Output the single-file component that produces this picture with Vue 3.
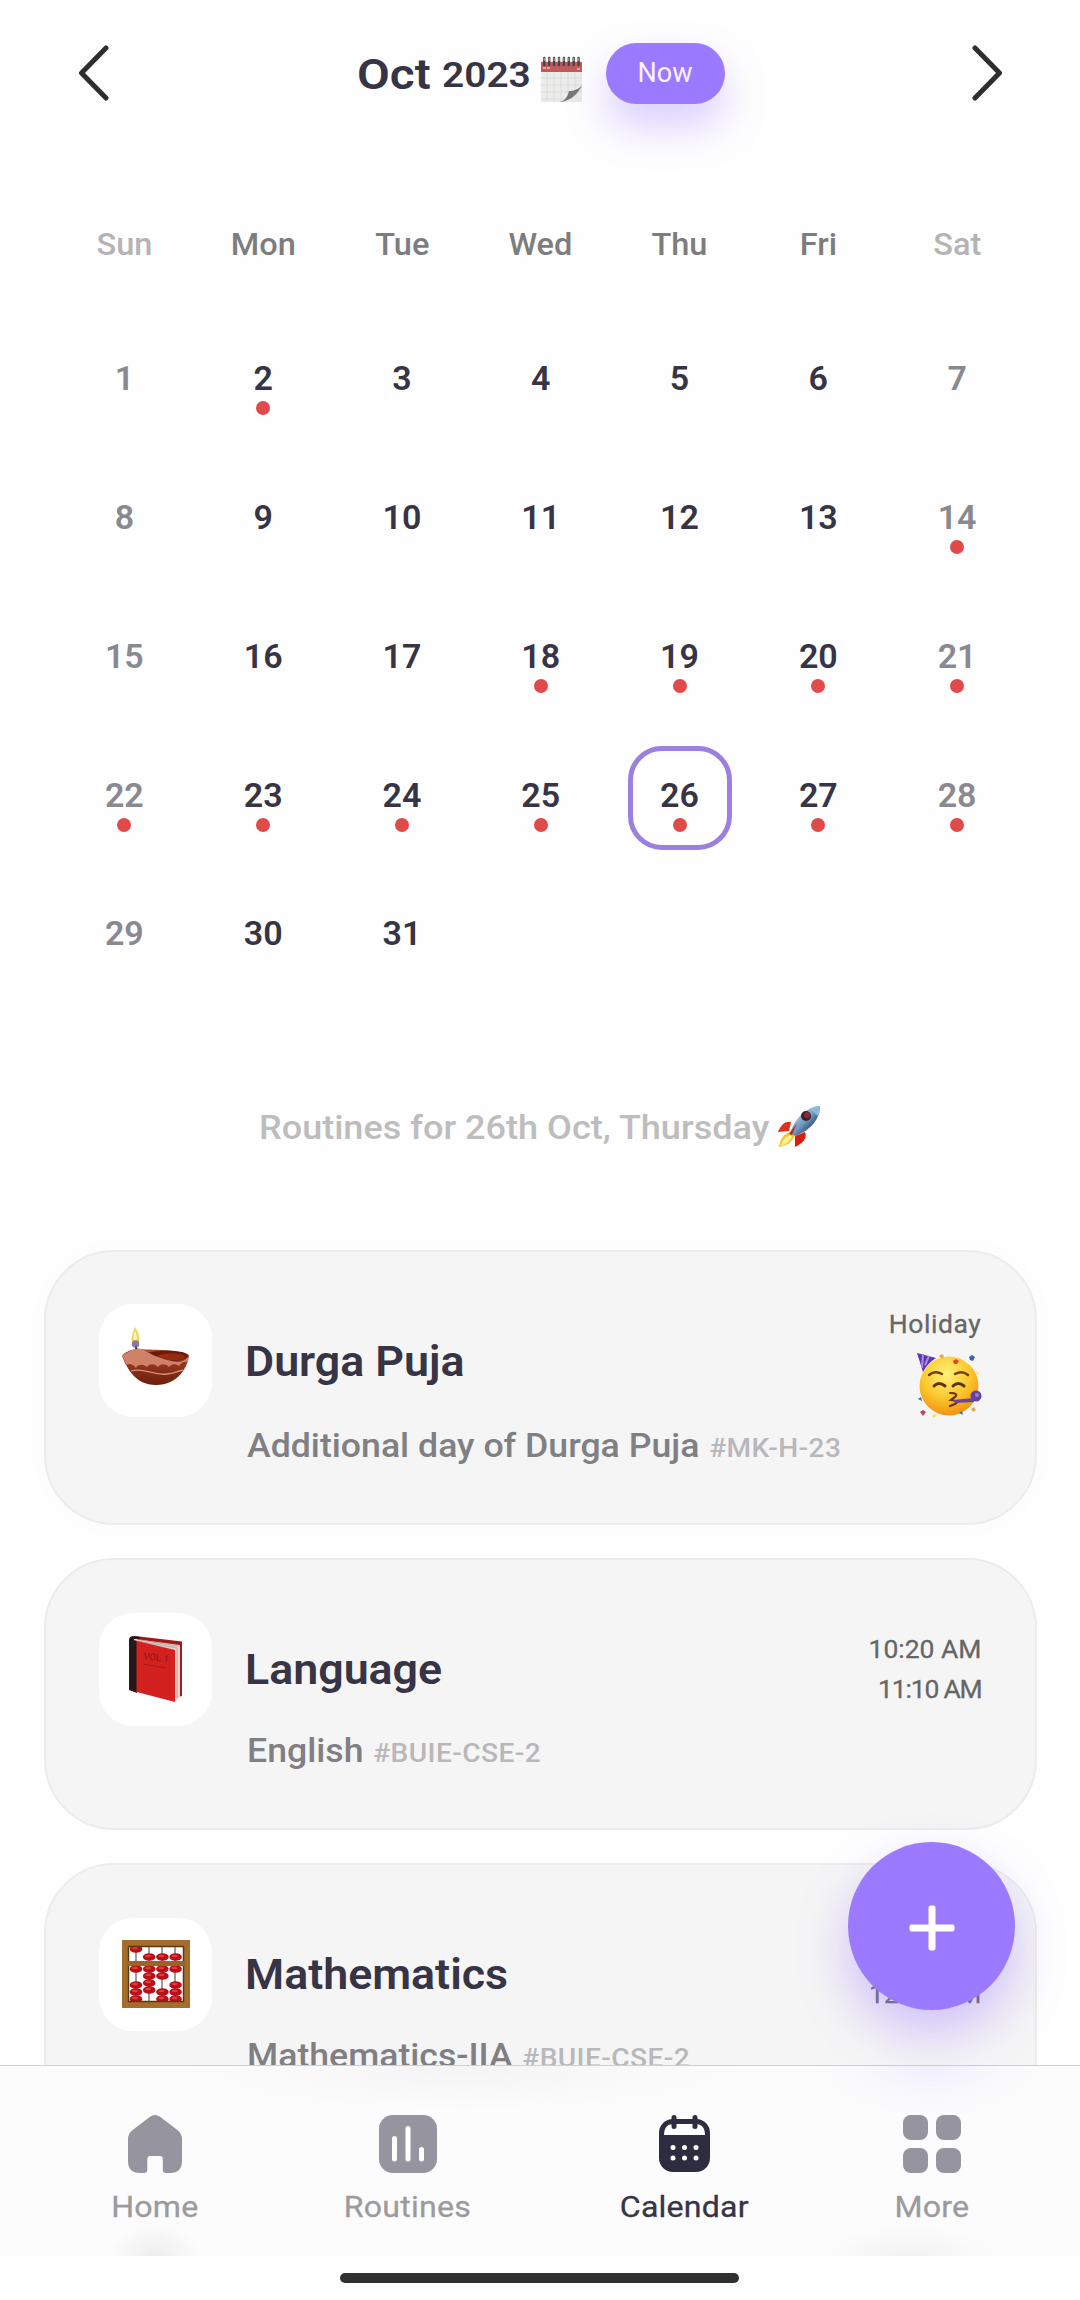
<script setup>
const weekdays = ['Sun', 'Mon', 'Tue', 'Wed', 'Thu', 'Fri', 'Sat']
const marked = [2, 14, 18, 19, 20, 21, 22, 23, 24, 25, 26, 27, 28]
const days = Array.from({ length: 31 }, (_, i) => ({
  n: i + 1,
  weekend: i % 7 === 0 || i % 7 === 6,
  event: marked.includes(i + 1),
  selected: i + 1 === 26,
}))
const beads = [
  [0, 7], [1, 15], [2, 15], [3, 15],
  [0, 27], [1, 27], [2, 27], [3, 27], [1, 34], [2, 34],
  [0, 43], [1, 41], [3, 43], [1, 48], [0, 50], [2, 50], [3, 50], [0, 57], [2, 57], [3, 57],
]
const routines = [
  { icon: 'diya', title: 'Durga Puja', sub: 'Additional day of Durga Puja', code: '#MK-H-23', holiday: true },
  { icon: 'book', title: 'Language', sub: 'English', code: '#BUIE-CSE-2', times: ['10:20 AM', '11:10 AM'] },
  { icon: 'abacus', title: 'Mathematics', sub: 'Mathematics-IIA', code: '#BUIE-CSE-2', times: ['11:10 AM', '12:00 PM'] },
]
</script>

<template>
  <div class="screen">
    <main class="content">
      <header class="top">
        <svg class="arrow" width="31" height="56" viewBox="0 0 31 56"><path d="M28 3 3.500 28 28 53" /></svg>
        <div class="heading">
          <span class="month">Oct</span>
          <span class="year">2023</span>
          <svg class="pad" width="41" height="46" viewBox="0 0 41 46">
            <rect y="5" width="41" height="41" fill="#ececeb" />
            <path d="M0 22H41M0 29H41M0 36H41M0 43H41M6 16V46M13 16V46M20 16V46M27 16V46M34 16V46" stroke="#d9d9d8" stroke-width=".8" />
            <rect y="6" width="41" height="10" fill="#c25a5c" />
            <path d="M2 12h3M6 12h3M36 13h3" stroke="#e3a3a3" stroke-width="2" />
            <path d="M18 46C25 45 27 39 28 35 33 35 38 33 41 29V46Z" fill="#d8d8d7" />
            <path d="M18 46C25 45 27 39 28 35 33 35 38 33 41 29 37 37 30 45 20 46Z" fill="#777" />
            <path d="M21 46C31 44 37 38 41 32V46Z" fill="#e9e9e8" />
            <g v-for="i in 8" :key="i">
              <path :d="`M${i * 4.9 - 1.6} 9V2`" stroke="#444" stroke-width="2.400" stroke-linecap="round" />
              <path :d="`M${i * 4.9 - 1.6} 5V2`" stroke="#bbb" stroke-width=".9" />
            </g>
          </svg>
          <button class="now">Now</button>
        </div>
        <svg class="arrow" width="31" height="56" viewBox="0 0 31 56"><path d="M3 3 27.500 28 3 53" /></svg>
      </header>

      <section class="calendar">
        <div v-for="(d, i) in weekdays" :key="d" class="weekday" :class="{ dim: i === 0 || i === 6 }">{{ d }}</div>
        <div v-for="d in days" :key="d.n" class="cell">
          <div class="day" :class="{ weekend: d.weekend, selected: d.selected }">
            <span>{{ d.n }}</span>
            <i v-if="d.event" class="dot"></i>
          </div>
        </div>
      </section>

      <h2 class="routines-title">
        <span>Routines for 26th Oct, Thursday</span>
        <svg width="43" height="42" viewBox="0 0 43 42">
          <defs>
            <linearGradient id="hull" x1="0" y1="0" x2="1" y2="1">
              <stop offset=".2" stop-color="#b9d6ea" /><stop offset=".5" stop-color="#6d9cc4" /><stop offset=".8" stop-color="#26374d" />
            </linearGradient>
          </defs>
          <path d="M13 16C8 15 3 18 0 26L11 25Z" fill="#e0301e" />
          <path d="M27 26C29 31 27 36 17 41L17 30Z" fill="#d3200f" />
          <path d="M13 26C6 27 2 33 1 41 8 40 14 37 17 29Z" fill="#f9c52a" />
          <path d="M12 29C7 31 4 35 3 40 8 38 11 36 14 31Z" fill="#fff19a" />
          <path d="M42 0C30 1 20 9 14 22L12 27 17 30C31 25 42 14 42 0Z" fill="url(#hull)" />
          <path d="M42 0C38 0 35 1 32 3L40 10C42 7 42 3 42 0Z" fill="#8fb9db" />
          <circle cx="28" cy="10" r="5" fill="#37222b" /><circle cx="29" cy="9" r="3" fill="#8a2a2a" />
          <path d="M19 17 11 28 14 29Z" fill="#be2718" />
        </svg>
      </h2>

      <section class="list">
        <article v-for="r in routines" :key="r.title" class="card" :class="{ holiday: r.holiday }">
          <div class="tile">
            <svg v-if="r.icon === 'diya'" class="diya" width="68" height="64" viewBox="0 0 68 64">
              <defs>
                <linearGradient id="bowl" x1="0" y1="0" x2="0" y2="1"><stop offset="0" stop-color="#b04a2c" /><stop offset="1" stop-color="#6d1d0c" /></linearGradient>
              </defs>
              <path d="M0 32C3 28 8 26 14 25 30 26 58 25 67 31 66 43 56 61 34 61 13 61 5 44 0 32Z" fill="url(#bowl)" />
              <ellipse cx="44" cy="32" rx="22" ry="5.500" fill="#6e1a08" />
              <ellipse cx="49" cy="33" rx="14" ry="3.500" fill="#932c10" />
              <path d="M0 32C4 29 9 26 15 24 25 26 33 35 55 38 61 38 66 35 67 31 67 34 66 36 65 38 62 37 59 39 57 42 53 39 49 40 47 43 43 39 38 40 36 43 32 39 27 40 25 43 21 40 16 40 14 44 11 40 7 39 5 41Z" fill="#cf8267" />
              <path d="M9 47C22 43 32 52 45 50 52 50 55 47 61 46" fill="none" stroke="#d78f72" stroke-width="1.300" />
              <path d="M14 25V18" stroke="#4c2b30" stroke-width="2" />
              <path d="M13 3C9 12 8 19 13 22 20 20 18 10 13 3Z" fill="#f2d35c" />
              <path d="M13 7C11 12 11 15 13 17 16 15 15 11 13 7Z" fill="#fff5b5" />
              <circle cx="13.500" cy="20" r="3.800" fill="#7967a3" opacity=".85" />
            </svg>
            <svg v-else-if="r.icon === 'book'" width="54" height="67" viewBox="0 0 54 67">
              <path d="M6 0 53 5.500V60L46 62Z" fill="#a01b17" />
              <path d="M5 3 51 9V61L45 66Z" fill="#e6cfcc" />
              <path d="M8 5 48 12M11 4 49 10M48 12V62" stroke="#b09d9b" stroke-width=".8" />
              <path d="M0 4Q0 0 5 0L11 1 11 3 5 3 8 57 0 54Z" fill="#26191b" />
              <path d="M4 4 46 14V66L4 55Z" fill="#d3211f" />
              <path d="M4 4 7.500 5V56L4 55Z" fill="#241719" />
              <text x="14" y="23" transform="rotate(8 14 23)" font-size="9.500" fill="#8e1414">VOL.1</text>
              <path d="M14 28 37 32" stroke="#a51a18" />
            </svg>
            <svg v-else width="68" height="68" viewBox="0 0 68 68">
              <path d="M14 6V62M27 6V62M40 6V62M53 6V62" stroke="#8b817e" stroke-width="1.600" />
              <g v-for="([c, y], i) in beads" :key="i">
                <ellipse :cx="14 + c * 13.2" :cy="y + 2" rx="6.300" ry="3.800" fill="#b90f18" />
                <ellipse :cx="13 + c * 13.2" :cy="y + 1" rx="3" ry="1.300" fill="#e33b3a" />
              </g>
              <rect x="3" y="3" width="62" height="62" fill="none" stroke="#a56d2c" stroke-width="6" />
              <rect x="6.500" y="6.500" width="55" height="55" fill="none" stroke="#5d3711" stroke-width="1.500" />
              <path d="M6 23.500H62" stroke="#9a6429" stroke-width="5" />
            </svg>
          </div>
          <div class="info">
            <h3>{{ r.title }}</h3>
            <p><span class="sub">{{ r.sub }}</span><span class="code">{{ r.code }}</span></p>
          </div>
          <div class="side">
            <template v-if="r.holiday">
              <span class="tag">Holiday</span>
              <svg class="party" width="65" height="65" viewBox="0 0 65 65">
                <defs>
                  <radialGradient id="face" cx=".45" cy=".3" r=".75"><stop offset="0" stop-color="#fff27a" /><stop offset=".55" stop-color="#fcc62b" /><stop offset="1" stop-color="#ee8a10" /></radialGradient>
                </defs>
                <circle cx="32" cy="33" r="29.500" fill="url(#face)" />
                <path d="M0 0 19 5C13 9 9 13 6 19Z" fill="#5b38b2" />
                <path d="M6 1 5 15M12 3 8 12" stroke="#a98ae8" stroke-width="2" />
                <path d="M12 22Q18 17 25 21M38 21Q45 17 51 22" fill="none" stroke="#6d4312" stroke-width="2.500" stroke-linecap="round" />
                <path d="M17 33Q22 28 28 33M36 33Q41 28 47 33" fill="none" stroke="#5b3510" stroke-width="3" stroke-linecap="round" />
                <path d="M33 40Q42 40 38 44L34 47Q43 48 38 51L33 53" fill="none" stroke="#6a3307" stroke-width="2.200" stroke-linecap="round" />
                <path d="M36 47 57 45V49L38 50Z" fill="#6b4498" />
                <circle cx="59" cy="43" r="5.500" fill="#6242a4" /><circle cx="60" cy="42" r="2" fill="#9b7ed0" />
                <path d="M52 4l3-2 3 2-2 4-3-1Z" fill="#3463b5" /><path d="M36 8l3-2 3 2-2 3-3 0Z" fill="#d4493c" />
                <path d="M22 3l3-2 2 2-2 3Z" fill="#eba04c" /><path d="M3 59l3-2 3 2-3 4Z" fill="#c1436c" />
                <path d="M1 46l3-2 1 4Z" fill="#3769ad" /><path d="M42 60l3-2 1 4Z" fill="#446eaf" />
                <path d="M54 56l3-2 2 3-3 2Z" fill="#e2a458" /><path d="M15 62l3-1 2 2-4 2ZM59 18l3 2-2 2Z" fill="#ffe34a" />
              </svg>
            </template>
            <template v-else>
              <span v-for="t in r.times" :key="t" class="time" :class="{ tight: t.startsWith('11') }">{{ t }}</span>
            </template>
          </div>
        </article>
      </section>
    </main>

    <nav class="tabs">
      <a class="tab home">
        <svg width="58" height="58" viewBox="0 0 58 58"><path d="M24 1.800Q29 -1.800 34 1.800L52 15.500Q56 19 56 24V46Q56 58 44 58H40Q36.800 58 36.800 55V44Q36.800 41 34 41H24Q21.300 41 21.300 44V55Q21.300 58 18 58H14Q2 58 2 46V24Q2 19 6 15.500Z" fill="#96949f" /></svg>
        <span>Home</span>
      </a>
      <a class="tab routines">
        <svg width="58" height="58" viewBox="0 0 58 58"><rect width="58" height="58" rx="14" fill="#96949f" /><path d="M15.500 23.500V44M29 13.500V44M42.500 34.500V44" stroke="#fff" stroke-width="5" stroke-linecap="round" /></svg>
        <span>Routines</span>
      </a>
      <a class="tab calendar-tab">
        <svg width="51" height="58" viewBox="0 0 51 58">
          <rect y="4" width="51" height="53" rx="14" fill="#2e2c3f" />
          <path d="M5 20C5 12 9 9 15 9H36C42 9 46 12 46 20Z" fill="#fdfdfd" />
          <path d="M15 2.500V11.500M36 2.500V11.500" stroke="#2e2c3f" stroke-width="5" stroke-linecap="round" />
          <g fill="#fff"><circle v-for="i in 6" :key="i" :cx="14 + ((i - 1) % 3) * 11.500" :cy="i > 3 ? 43 : 32.500" r="2.500" /></g>
        </svg>
        <span>Calendar</span>
      </a>
      <a class="tab more">
        <svg width="58" height="58" viewBox="0 0 58 58" fill="#96949f"><rect width="25" height="25" rx="8" /><rect x="33" width="25" height="25" rx="8" /><rect y="33" width="25" height="25" rx="8" /><rect x="33" y="33" width="25" height="25" rx="8" /></svg>
        <span>More</span>
      </a>
    </nav>
    <footer class="system"><div class="indicator"></div></footer>

    <button class="fab">
      <svg width="46" height="46" viewBox="0 0 46 46" fill="#fff"><rect x="19.500" y=".5" width="7" height="45" rx="2" /><rect x=".5" y="19.500" width="45" height="7" rx="2" /></svg>
    </button>
  </div>
</template>

<style>
body { background: #fefefe; }
</style>

<style scoped>
.screen {
  position: relative;
  width: 1080px;
  height: 2300px;
  overflow: hidden;
  display: flex;
  flex-direction: column;
  background: #fefefe;
  color: #363445;
  font-family: Roboto, "Noto Sans", sans-serif;
}
svg { display: block; flex: none; }
button { border: 0; padding: 0; font-family: inherit; }
.content { height: 2065px; overflow: hidden; flex: none; }
.top { display: flex; justify-content: space-between; align-items: center; height: 173px; padding: 0 77px 27px 78px; box-sizing: border-box; }
.arrow path { fill: none; stroke: #2e2e2e; stroke-width: 5; stroke-linecap: round; stroke-linejoin: round; }
.heading { display: flex; align-items: center; font-weight: 600; }
.month { width: 85px; padding-top: 2px; font-size: 42.500px; line-height: 61px; transform: scaleX(1.12); transform-origin: left; }
.year { width: 99px; padding-top: 6px; font-size: 35px; line-height: 62px; transform: scaleX(1.11); transform-origin: left; }
.pad { margin-top: 11px; }
.now { width: 119px; height: 61px; margin-left: 24px; border-radius: 31px; background: #9b7aff; color: #f9f2ff; font-size: 27px; box-shadow: 0 22px 40px rgba(155, 122, 255, .36); }
.calendar { display: grid; grid-template-columns: repeat(7, 138.800px); grid-auto-rows: 138.800px; justify-content: center; padding-left: 1.500px; }
.weekday { display: flex; align-items: center; justify-content: center; padding-top: 5px; color: #7d7d7d; font-weight: 500; font-size: 31px; transform: scaleX(1.05); }
.weekday.dim { color: #b4b4b4; }
.cell { display: flex; align-items: center; justify-content: center; }
.day { position: relative; display: flex; align-items: center; justify-content: center; box-sizing: border-box; width: 104px; height: 104px; padding-bottom: 6px; border: 5px solid transparent; border-radius: 34px; font-size: 34px; font-weight: 600; }
.day.weekend { color: #89898f; }
.day.selected { border-color: #9b80df; }
.dot { position: absolute; left: 40px; bottom: 13px; width: 14px; height: 14px; border-radius: 50%; background: #e14a4a; }
.routines-title { display: flex; justify-content: center; align-items: center; gap: 8px; height: 60px; margin: 91px 0 0; padding: 0 0 93px; color: #bdbdbd; font-size: 34px; font-weight: 500; }
.routines-title span { margin-right: 29px; transform: scaleX(1.06); transform-origin: left; }
.list { display: flex; flex-direction: column; gap: 33px; padding: 0 43.500px 0 44px; }
.card { display: grid; grid-template-columns: 113px 1fr auto; box-sizing: border-box; flex: none; height: 272px; padding: 53px 53px 0; border: 2px solid #ececec; border-radius: 70px; background: #f5f5f5; }
.card.holiday { height: 275px; padding-top: 52px; box-shadow: 0 0 36px rgba(0, 0, 0, .015); }
.tile { display: flex; align-items: center; justify-content: center; width: 113px; height: 113px; border-radius: 34px; background: #fff; }
.diya { margin-top: -8px; }
.info { padding-left: 33px; }
h3 { margin: 0; font-size: 42px; line-height: 114px; font-weight: 600; transform: scaleX(1.065); transform-origin: left; }
.holiday h3 { line-height: 116px; }
p { display: flex; align-items: baseline; gap: 9px; margin: 4px 0 0 2px; line-height: 40px; font-weight: 500; white-space: nowrap; transform: scaleX(1.08); transform-origin: left; }
.holiday p { margin-top: 6px; }
.sub { color: #7f7f84; font-size: 33px; }
.code { color: #b8b8ba; font-size: 26px; letter-spacing: .4px; }
.side { display: flex; flex-direction: column; align-items: flex-end; width: 0; padding-top: 16px; white-space: nowrap; color: #666; font-size: 26.500px; line-height: 40px; -webkit-text-stroke: .3px #666; }
.time.tight { letter-spacing: -1.2px; }
.holiday .side { padding-top: 0; }
.tag { letter-spacing: .6px; }
.party { margin-top: 9px; }
.tabs { display: flex; justify-content: space-between; flex: none; box-sizing: border-box; height: 191px; padding: 49px 113px 0; border-top: 1px solid #cfcfd0; background:
  radial-gradient(ellipse 45px 32px at 155px 191px, #ededed, transparent),
  radial-gradient(ellipse 85px 32px at 910px 191px, #f2f2f2, transparent),
  radial-gradient(ellipse 270px 45px at 465px 0, #f4f4f4, transparent),
  radial-gradient(ellipse 110px 50px at 930px 0, #f4f2fd, transparent), #fcfcfc; }
.tab { display: flex; flex-direction: column; align-items: center; color: #9b9b9d; font-size: 30px; }
.tab span { margin-top: 16px; line-height: 36px; letter-spacing: .2px; white-space: nowrap; transform: scaleX(1.07); -webkit-text-stroke: .3px currentColor; }
.home { width: 83px; } .routines { width: 128px; } .calendar-tab { width: 130px; color: #363445; } .more { width: 70px; }
.system { height: 44px; }
.indicator { width: 399px; height: 10px; margin: 17px 0 0 340px; border-radius: 5px; background: #303030; }
.fab { position: absolute; left: 848px; top: 1842px; width: 167px; height: 168px; display: flex; align-items: center; justify-content: center; border-radius: 50%; background: #9b7aff; box-shadow: 0 24px 50px rgba(155, 122, 255, .42); }
.fab svg { margin-top: 4px; }
</style>
